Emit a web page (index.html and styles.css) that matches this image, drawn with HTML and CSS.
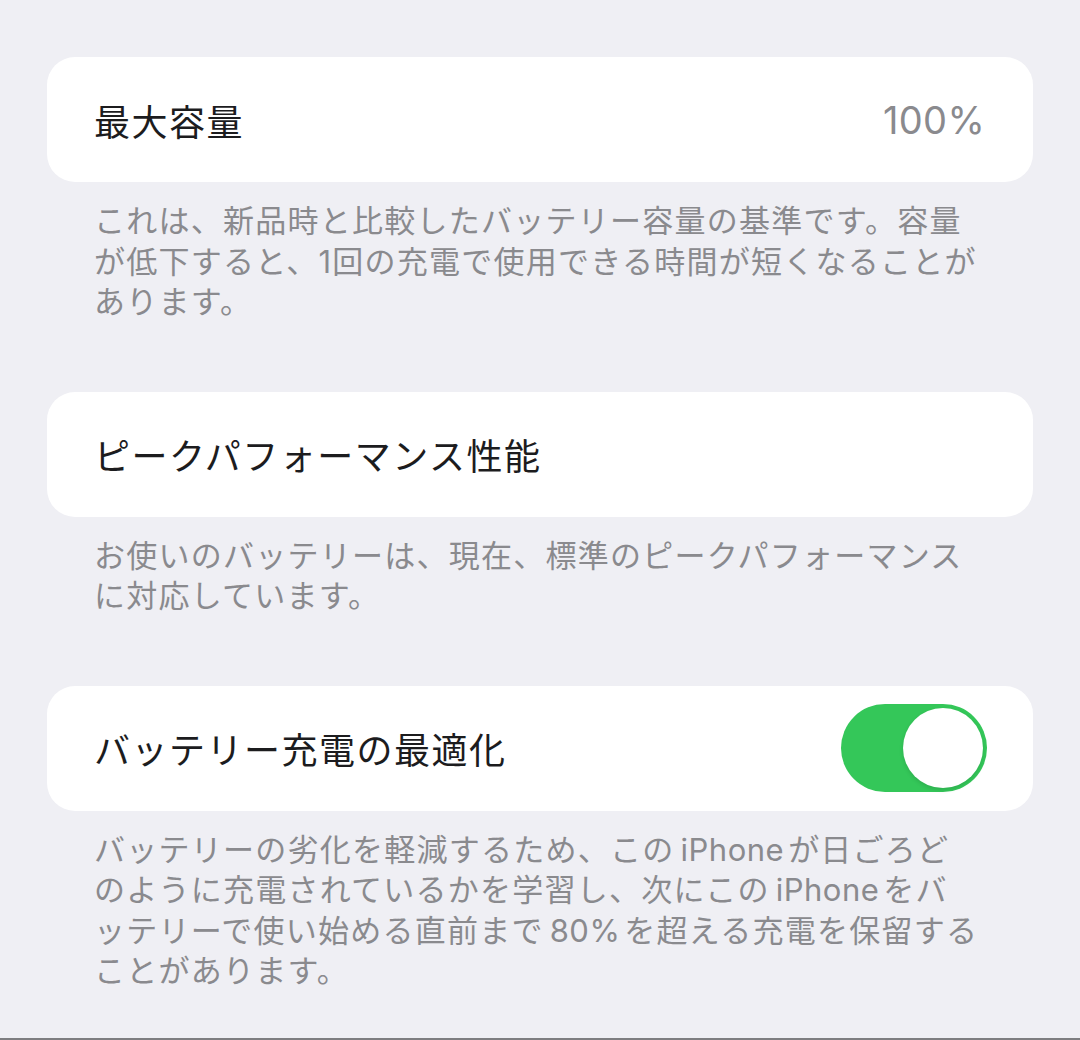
FILE: index.html
```html
<!DOCTYPE html>
<html lang="ja">
<head>
    <meta charset="UTF-8">
    <meta name="viewport" content="width=device-width, initial-scale=1.0">
    <title>バッテリーの状態</title>
    <link rel="stylesheet" href="styles.css">
</head>
<body>
    <div class="page">
        <section class="group">
            <div class="cell">
                <span class="label">最大容量</span>
                <span class="value">100%</span>
            </div>
            <p class="footnote">これは、新品時と比較したバッテリー容量の基準です。容量<br>が低下すると、1回の充電で使用できる時間が短くなることが<br>あります。</p>
        </section>

        <section class="group">
            <div class="cell">
                <span class="label">ピークパフォーマンス性能</span>
            </div>
            <p class="footnote">お使いのバッテリーは、現在、標準のピークパフォーマンス<br>に対応しています。</p>
        </section>

        <section class="group">
            <div class="cell">
                <span class="label">バッテリー充電の最適化</span>
                <span class="toggle on"><span class="knob"></span></span>
            </div>
            <p class="footnote">バッテリーの劣化を軽減するため、この<span class="latin">iPhone</span>が日ごろど<br>のように充電されているかを学習し、次にこの<span class="latin">iPhone</span>をバ<br>ッテリーで使い始める直前まで<span class="latin">80%</span>を超える充電を保留する<br>ことがあります。</p>
        </section>
    </div>
</body>
</html>
```

FILE: styles.css
```css
body {
    margin: 0;
    background-color: #efeff4;
    font-family: Inter, "Noto Sans CJK JP", sans-serif;
}
.page {
    height: 1040px;
    border-bottom: 2px solid #7d7d80;
    padding: 57px 47px 0;
    box-sizing: border-box;
    overflow: hidden;
}
.group {
    margin: 0 0 69px;
}
.cell {
    display: flex;
    align-items: center;
    justify-content: space-between;
    height: 125px;
    padding: 0 48px 0 47px;
    background-color: #fff;
    border-radius: 28px;
    box-sizing: border-box;
}
.label {
    font-size: 36px;
    letter-spacing: 1.5px;
    color: #1c1c1e;
}
.value {
    font-size: 38px;
    color: #8a8a8e;
    letter-spacing: 0.3px;
}
.footnote {
    margin: 19px 0 0;
    padding-left: 47px;
    font-size: 31px;
    line-height: 40.5px;
    letter-spacing: 1.25px;
    color: #8a8a8e;
    white-space: nowrap;
}
.latin {
    margin: 0 4px 0 6px;
    letter-spacing: 0.5px;
}
.toggle {
    display: flex;
    align-items: center;
    width: 146px;
    height: 88px;
    margin-right: -2px;
    padding: 4px;
    border-radius: 44px;
    background-color: #e9e9eb;
    box-sizing: border-box;
}
.toggle.on {
    background-color: #34c759;
    justify-content: flex-end;
}
.knob {
    width: 80px;
    height: 80px;
    border-radius: 50%;
    background-color: #fff;
    box-shadow: 0 2px 4px rgba(0, 0, 0, 0.12);
}
```
